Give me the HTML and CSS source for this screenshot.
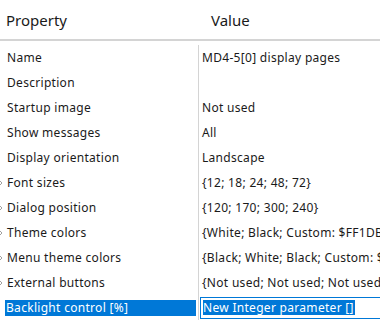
FILE: index.html
```html
<!DOCTYPE html>
<html lang="en">
  <head>
    <meta charset="UTF-8">
    <title>Properties</title>
    <link rel="stylesheet" href="styles.css">
  </head>
  <body>
    <div class="grid">
      <div class="head">
        <div class="head-prop">Property</div>
        <div class="head-value">Value</div>
      </div>
      <div class="rows">
        <div class="row">
          <div class="name"><span>Name</span></div>
          <div class="value">MD4-5[0] display pages</div>
        </div>
        <div class="row">
          <div class="name"><span>Description</span></div>
          <div class="value"></div>
        </div>
        <div class="row">
          <div class="name"><span>Startup image</span></div>
          <div class="value">Not used</div>
        </div>
        <div class="row">
          <div class="name"><span>Show messages</span></div>
          <div class="value">All</div>
        </div>
        <div class="row">
          <div class="name"><span>Display orientation</span></div>
          <div class="value">Landscape</div>
        </div>
        <div class="row group">
          <div class="name"><svg class="chev" width="4" height="6" viewBox="0 0 4 6"><path d="M0.5 0.5 L3 3 L0.5 5.5" fill="none" stroke="#a0a0a0" stroke-width="1"/></svg><span>Font sizes</span></div>
          <div class="value">{12; 18; 24; 48; 72}</div>
        </div>
        <div class="row group">
          <div class="name"><svg class="chev" width="4" height="6" viewBox="0 0 4 6"><path d="M0.5 0.5 L3 3 L0.5 5.5" fill="none" stroke="#a0a0a0" stroke-width="1"/></svg><span>Dialog position</span></div>
          <div class="value">{120; 170; 300; 240}</div>
        </div>
        <div class="row group">
          <div class="name"><svg class="chev" width="4" height="6" viewBox="0 0 4 6"><path d="M0.5 0.5 L3 3 L0.5 5.5" fill="none" stroke="#a0a0a0" stroke-width="1"/></svg><span>Theme colors</span></div>
          <div class="value">{White; Black; Custom: $FF1DB954; Custom: $FF191414}</div>
        </div>
        <div class="row group">
          <div class="name"><svg class="chev" width="4" height="6" viewBox="0 0 4 6"><path d="M0.5 0.5 L3 3 L0.5 5.5" fill="none" stroke="#a0a0a0" stroke-width="1"/></svg><span>Menu theme colors</span></div>
          <div class="value">{Black; White; Black; Custom: $FF1DB954}</div>
        </div>
        <div class="row group">
          <div class="name"><svg class="chev" width="4" height="6" viewBox="0 0 4 6"><path d="M0.5 0.5 L3 3 L0.5 5.5" fill="none" stroke="#a0a0a0" stroke-width="1"/></svg><span>External buttons</span></div>
          <div class="value">{Not used; Not used; Not used; Not used}</div>
        </div>
        <div class="row selected">
          <div class="name"><span>Backlight control [%]</span></div>
          <div class="value"><div class="editor"><span>New Integer parameter []</span></div></div>
        </div>
      </div>
    </div>
  </body>
</html>
```

FILE: styles.css
```css
body {
  margin: 0;
  background: #fff;
  font-family: "Noto Sans", "Open Sans", sans-serif;
  font-size: 12px;
  letter-spacing: 0.3px;
  color: #1a1a1a;
  overflow: hidden;
}

.grid {
  width: 380px;
  height: 329px;
  overflow: hidden;
}

.head {
  display: flex;
  height: 39px;
  align-items: center;
  border-bottom: 2px solid #d4d4d4;
  font-size: 15px;
  letter-spacing: 0;
  white-space: nowrap;
}

.head-prop {
  width: 198px;
  padding-left: 6px;
  box-sizing: border-box;
}

.head-value {
  padding-left: 13px;
}

.rows {
  padding-top: 4px;
}

.row {
  display: flex;
  height: 25px;
  white-space: nowrap;
}

.name {
  position: relative;
  width: 198px;
  flex-shrink: 0;
  box-sizing: border-box;
  padding: 0 2px 0 5px;
  display: flex;
  align-items: center;
}

.name span {
  display: block;
  flex-grow: 1;
  padding-left: 2px;
  line-height: 16px;
}

.chev {
  position: absolute;
  left: -1px;
  top: 10px;
}

.value {
  border-left: 1px solid #d4d4d4;
  flex-grow: 1;
  padding-left: 3px;
  display: flex;
  align-items: center;
  overflow: hidden;
}

.selected .name span {
  background: #0078d7;
  color: #fff;
  padding-left: 1px;
}

.selected .value {
  padding-left: 1px;
}

.editor {
  border: 1px solid #0078d7;
  height: 20px;
  width: 240px;
  flex-shrink: 0;
  display: flex;
  align-items: center;
  padding-left: 2px;
}

.editor span {
  background: #0078d7;
  color: #fff;
  line-height: 15px;
  padding-right: 1px;
}
```
